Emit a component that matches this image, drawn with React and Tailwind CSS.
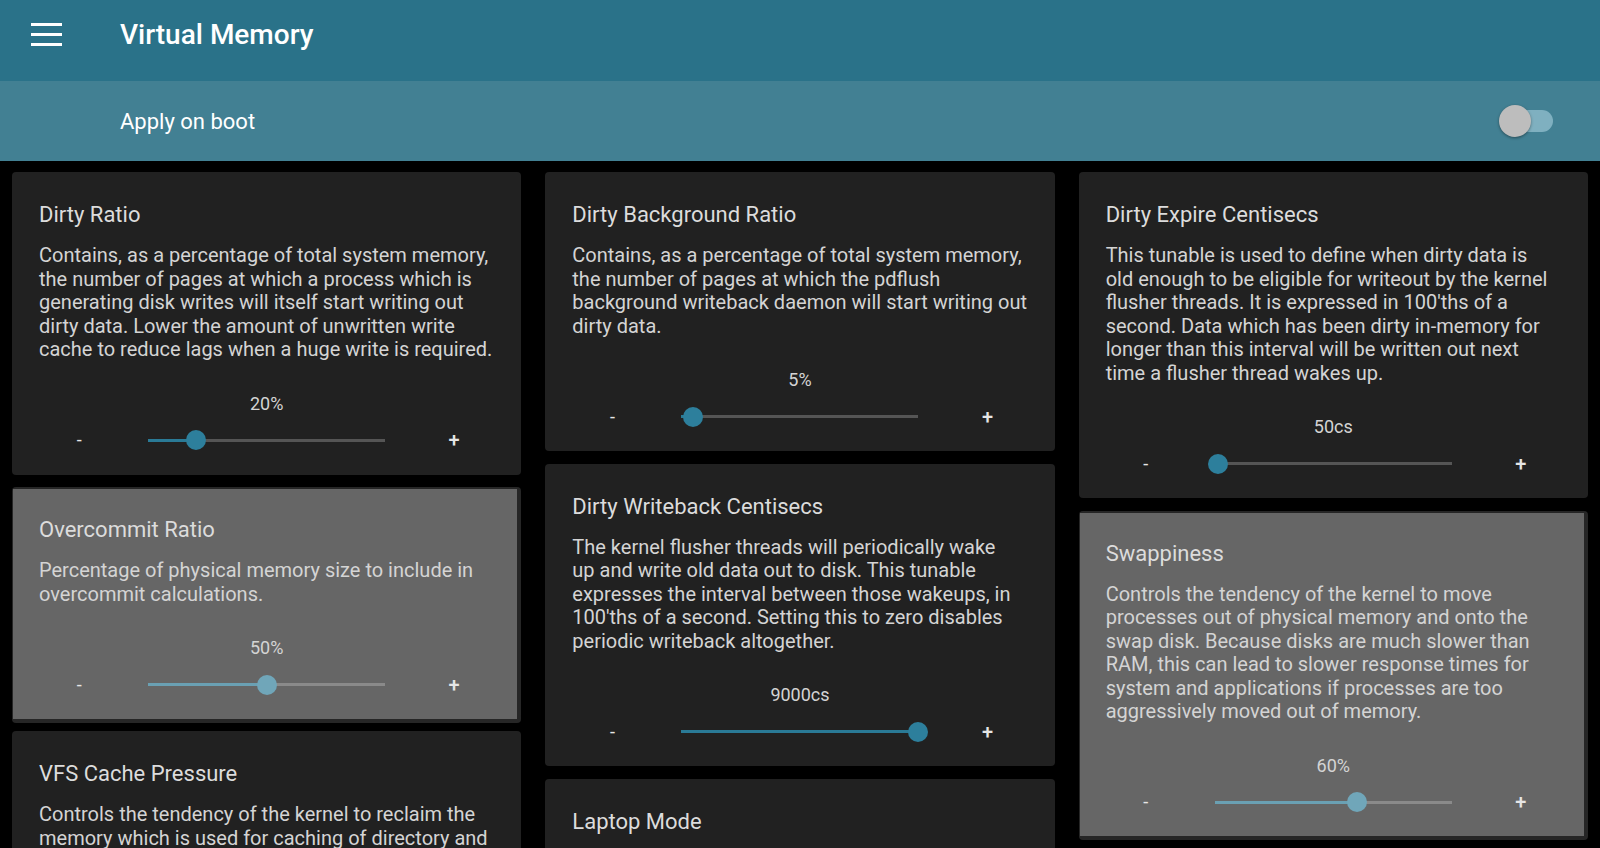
import React from 'react'

const columns = [
  [
    {
      title: 'Dirty Ratio',
      desc: 'Contains, as a percentage of total system memory, the number of pages at which a process which is generating disk writes will itself start writing out dirty data. Lower the amount of unwritten write cache to reduce lags when a huge write is required.',
      value: '20%', pos: 0.2,
    },
    {
      title: 'Overcommit Ratio',
      desc: 'Percentage of physical memory size to include in overcommit calculations.',
      value: '50%', pos: 0.5, pressed: true,
    },
    {
      title: 'VFS Cache Pressure',
      desc: 'Controls the tendency of the kernel to reclaim the memory which is used for caching of directory and inode objects.',
      value: '100', pos: 0.5,
    },
  ],
  [
    {
      title: 'Dirty Background Ratio',
      desc: 'Contains, as a percentage of total system memory, the number of pages at which the pdflush background writeback daemon will start writing out dirty data.',
      value: '5%', pos: 0.05,
    },
    {
      title: 'Dirty Writeback Centisecs',
      desc: "The kernel flusher threads will periodically wake\nup and write old data out to disk. This tunable expresses the interval between those wakeups, in 100'ths of a second. Setting this to zero disables periodic writeback altogether.",
      value: '9000cs', pos: 1,
    },
    {
      title: 'Laptop Mode',
      desc: 'Laptop mode is a knob that controls "laptop mode". When enabled, the kernel delays writing to disk to save power.',
    },
  ],
  [
    {
      title: 'Dirty Expire Centisecs',
      desc: "This tunable is used to define when dirty data is\nold enough to be eligible for writeout by the kernel flusher threads. It is expressed in 100'ths of a second. Data which has been dirty in-memory for longer than this interval will be written out next time a flusher thread wakes up.",
      value: '50cs', pos: 0.012,
    },
    {
      title: 'Swappiness',
      desc: 'Controls the tendency of the kernel to move processes out of physical memory and onto the swap disk. Because disks are much slower than RAM, this can lead to slower response times for system and applications if processes are too aggressively moved out of memory.',
      value: '60%', pos: 0.6, pressed: true,
    },
  ],
]

function Slider({ pos, pressed }) {
  return (
    <div className="flex items-center justify-center h-6">
      <span className="w-6 text-center text-[18px] leading-none text-[#e6e6e6]">-</span>
      <div className={`relative mx-[57px] w-[237px] h-[3px] ${pressed ? 'bg-[#8a8a8a]' : 'bg-[#555555]'}`}>
        <div className={`absolute left-0 top-0 h-full ${pressed ? 'bg-[#6aa0b3]' : 'bg-[#2a7a96]'}`}
          style={{ width: `${pos * 100}%` }} />
        <div className={`absolute top-1/2 w-5 h-5 -mt-[10px] -ml-[10px] rounded-full ${pressed ? 'bg-[#70a6b9]' : 'bg-[#2d7f9c]'}`}
          style={{ left: `${pos * 100}%` }} />
      </div>
      <span className="w-6 text-center text-[20px] leading-none font-medium text-[#e6e6e6]">+</span>
    </div>
  )
}

function CardBody({ c }) {
  return (
    <>
      <h2 className="text-[22px] leading-[26px] text-[#dcdcdc] mb-[16px]">{c.title}</h2>
      <p className="text-[20px] leading-[23.5px] text-[#d4d4d4] whitespace-pre-line">{c.desc}</p>
      {c.value && (
        <>
          <div className="mt-[31px] text-center text-[18px] leading-[22px] text-[#d4d4d4]">{c.value}</div>
          <div className="mt-[13.5px]">
            <Slider pos={c.pos} pressed={c.pressed} />
          </div>
        </>
      )}
    </>
  )
}

function Card({ c }) {
  if (c.pressed) {
    // pressed state: lighter sheet over the card, dark edge showing right and below
    return (
      <div className="rounded bg-[#262626] pt-[2px] pl-[1px] pr-[4px] shadow-[0_4px_0_#262626]">
        <div className="bg-[#666666] pt-[28px] pl-[26px] pr-[23px] pb-[22px]">
          <CardBody c={c} />
        </div>
      </div>
    )
  }
  return (
    <div className="rounded bg-[#212121] pt-[30px] px-[27px] pb-[22.5px]">
      <CardBody c={c} />
    </div>
  )
}

export default function App() {
  return (
    <div className="h-[848px] overflow-hidden bg-black font-['Roboto',_'Liberation_Sans',_sans-serif]">
      {/* Toolbar */}
      <div className="h-[81px] bg-[#2a7289] flex items-center pb-[12px]">
        <div className="w-[120px] pl-[31px] flex flex-col gap-[7px]">
          <span className="block w-[31px] h-[3px] bg-white" />
          <span className="block w-[31px] h-[3px] bg-white" />
          <span className="block w-[31px] h-[3px] bg-white" />
        </div>
        <h1 className="text-[28px] font-medium text-white">Virtual Memory</h1>
      </div>

      {/* Apply on boot */}
      <div className="h-[80px] bg-[#428093] flex items-center pl-[120px] pr-[47px]">
        <span className="flex-1 text-[22px] text-white">Apply on boot</span>
        <div className="relative w-[53px] h-[22px] rounded-full bg-[#7fb0c0]">
          <div className="absolute -left-[1px] top-1/2 -mt-[16px] w-8 h-8 rounded-full bg-[#bdbdbd] shadow-[0_1px_3px_rgba(0,0,0,0.4)]" />
        </div>
      </div>

      {/* Cards */}
      <div className="grid grid-cols-3 gap-x-6 px-3 pt-[11px]">
        {columns.map((col, i) => (
          <div key={i} className="flex flex-col gap-[12.5px]">
            {col.map((c) => <Card key={c.title} c={c} />)}
          </div>
        ))}
      </div>
    </div>
  )
}
